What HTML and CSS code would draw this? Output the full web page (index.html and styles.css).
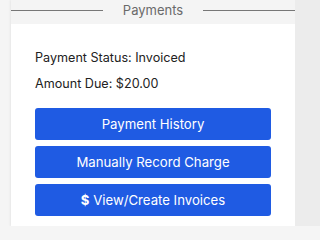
FILE: index.html
```html
<!DOCTYPE html>
<html>
<head>
<meta charset="utf-8">
<link rel="stylesheet" href="styles.css">
</head>
<body>
<div class="page">
  <div class="card">
    <div class="legend">
      <span class="rule"></span>
      <span class="legend-text">Payments</span>
      <span class="rule"></span>
    </div>
    <div class="body">
      <p class="line">Payment Status: Invoiced</p>
      <p class="line">Amount Due: $20.00</p>
      <div class="buttons">
        <button class="btn">Payment History</button>
        <button class="btn">Manually Record Charge</button>
        <button class="btn"><span class="dollar">$</span> View/Create Invoices</button>
      </div>
    </div>
  </div>
  <div class="side"></div>
</div>
</body>
</html>
```
FILE: styles.css
```css
html, body {
  margin: 0;
  padding: 0;
  background: #f5f5f5;
  font-family: Inter, "Liberation Sans", sans-serif;
}
.page {
  display: flex;
  height: 226px;
  padding-left: 11px;
  box-sizing: border-box;
}
.card {
  width: 284px;
  background: #fff;
  box-shadow: -1px 0 2px rgba(0,0,0,0.06);
}
.side {
  flex: 1;
  background: #ececec;
}
.legend {
  height: 24px;
  background: #f4f4f4;
  display: flex;
  align-items: flex-start;
}
.rule {
  flex: 1;
  height: 1px;
  background: #777;
  margin-top: 10px;
}
.legend-text {
  color: #6a6a6a;
  font-size: 13px;
  line-height: 20px;
  padding: 0 20px;
}
.body {
  padding: 27px 24px 0 24px;
}
.line {
  margin: 0 0 13px 0;
  font-size: 12.6px;
  line-height: 13px;
  color: #222;
}
.buttons {
  display: flex;
  flex-direction: column;
  gap: 6px;
  margin-top: 18px;
  width: 236px;
}
.btn {
  height: 32px;
  border: none;
  border-radius: 3px;
  background: #1f5be3;
  color: #fff;
  font-family: Inter, "Liberation Sans", sans-serif;
  font-size: 13.2px;
  padding: 0;
}
.dollar {
  font-weight: 700;
}
```
